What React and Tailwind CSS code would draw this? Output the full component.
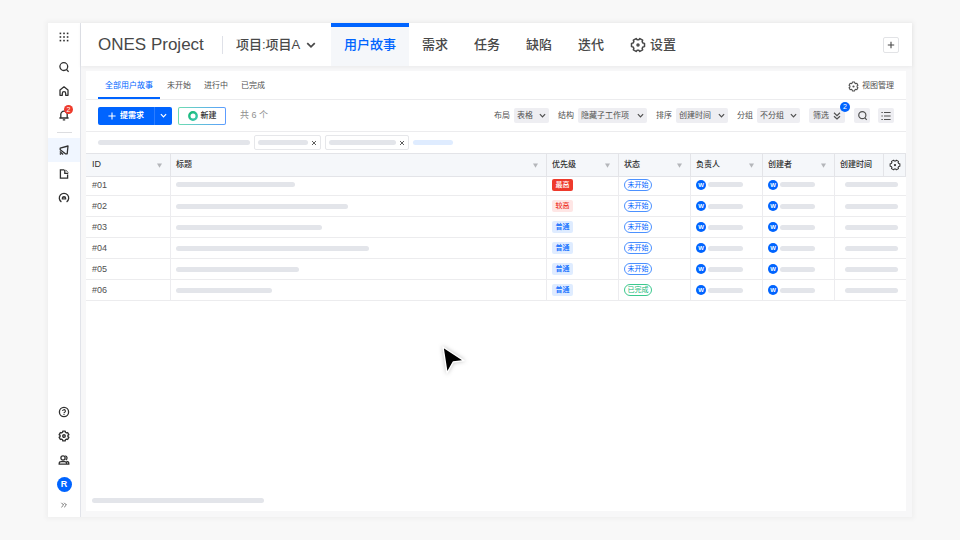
import { useState } from 'react';
import clsx from 'clsx';

const toggle = "cursor-pointer flex items-center justify-center";

const navTabs = ["用户故事", "需求", "任务", "缺陷", "迭代"];

const viewTabs = ["全部用户故事", "未开始", "进行中", "已完成"];

const filters = [
    { id: "layout", label: "布局", options: ["表格", "看板"], width: "w-[35px]" },
    { id: "tree", label: "结构", options: ["隐藏子工作项", "平铺"], width: "w-[69px]" },
    { id: "sort", label: "排序", options: ["创建时间", "优先级"], width: "w-[52px]" },
    { id: "group", label: "分组", options: ["不分组", "状态"], width: "w-[43px]" },
];

const columns = [
    { title: "ID", width: "w-[85px]" },
    { title: "标题", width: "" },
    { title: "优先级", width: "w-[72px]" },
    { title: "状态", width: "w-[72px]" },
    { title: "负责人", width: "w-[72px]" },
    { title: "创建者", width: "w-[72px]" },
];

const rows = [
    { id: "#01", size: 119, priority: "最高", status: "未开始" },
    { id: "#02", size: 172, priority: "较高", status: "未开始" },
    { id: "#03", size: 146, priority: "普通", status: "未开始" },
    { id: "#04", size: 193, priority: "普通", status: "未开始" },
    { id: "#05", size: 123, priority: "普通", status: "未开始" },
    { id: "#06", size: 96, priority: "普通", status: "已完成" },
];

const priorityStyle = {
    "最高": "bg-[#ee3a2c] text-white",
    "较高": "bg-[#fee6e5] text-[#ee3a2c]",
    "普通": "bg-[#dfecff] text-[#0064ff]",
};

// six teeth around the centre of a 16 x 16 box
const gearPoints = (turn) => {
    let points = [];
    for (let i = 0; i < 6; i++) {
        [[-21, 5.3], [-14, 6.7], [14, 6.7], [21, 5.3]].forEach(([angle, r]) => {
            let a = ((i * 60 + turn + angle) * Math.PI) / 180;
            points.push(`${(8 + r * Math.cos(a)).toFixed(2)},${(8 + r * Math.sin(a)).toFixed(2)}`);
        });
    }
    return points.join(" ");
};

const Gear = ({ className, turn = 0, stroke = 1.5, hole = 1 }) => (
    <svg viewBox="0 0 16 16" className={className} fill="none" stroke="currentColor" strokeWidth={stroke} strokeLinejoin="round">
        <polygon points={gearPoints(turn)} />
        <circle cx="8" cy="8" r={hole} />
    </svg>
);

const Chevron = ({ className }) => (
    <svg viewBox="0 0 8 8" className={className} fill="none" stroke="currentColor" strokeWidth="1.4">
        <path d="M1 2.5 4 5.5 7 2.5" />
    </svg>
);

const Search = ({ className }) => (
    <svg viewBox="0 0 12 12" className={className} fill="none" stroke="currentColor" strokeWidth="1.3">
        <circle cx="5.8" cy="5.6" r="3.9" />
        <path d="M8.4 8.4 10.6 10.8" />
    </svg>
);

const Icon = ({ children }) => (
    <svg viewBox="0 0 12 12" className="size-3" fill="none" stroke="currentColor" strokeWidth="1.3">
        {children}
    </svg>
);

const Bar = ({ className = "bg-[#e3e5ea]", size }) => (
    <div className={clsx("h-[5px] rounded-full", className)} style={size ? { width: size } : undefined} />
);

const SideButton = ({ label, active, children }) => (
    <button aria-label={label} className={clsx(toggle, "h-6 w-full shrink-0", active && "bg-[#f0f6ff]")}>
        {children}
    </button>
);

const Sidebar = () => (
    <aside className="w-[33px] shrink-0 border-r border-[#e1e3e9] bg-white text-[#303030] flex flex-col justify-between">
        <div>
            <button aria-label="应用" className={clsx(toggle, "h-7 w-full mb-1")}>
                <svg viewBox="0 0 10 10" className="size-2.5" fill="currentColor">
                    {[0.6, 4.2, 7.8].map((y) => [0.6, 4.2, 7.8].map((x) => (
                        <rect key={`${x}-${y}`} x={x} y={y} width="1.6" height="1.6" />
                    )))}
                </svg>
            </button>
            <SideButton label="搜索"><Search className="size-3" /></SideButton>
            <SideButton label="首页">
                <Icon>
                    <path d="M2 10.3V5L6 1.8 10 5v5.3H7.7V8.4a1.7 1.7 0 0 0-3.4 0v1.9Z" strokeLinejoin="round" />
                </Icon>
            </SideButton>
            <SideButton label="通知">
                <span className="relative">
                    <Icon>
                        <path d="M1.4 9h9.2M2.8 9V5.4a3.2 3.2 0 0 1 6.4 0V9M4.8 10.8h2.4" />
                    </Icon>
                    <span className="absolute -top-1 left-1.5 size-[9px] rounded-full bg-[#ee3a2c] text-white text-[7px] leading-[9px] text-center">2</span>
                </span>
            </SideButton>
            <div className="mx-auto my-[5px] h-px w-[15px] bg-[#dcdde0]" />
            <SideButton label="项目" active>
                <Icon>
                    <path d="M2.2 5.8V4.2L10 2 9.2 9.8H7.4L2.2 5.8Z" strokeLinejoin="round" />
                    <path d="M1.8 7.6 5.2 10.4M1.8 9.4 3 10.4" />
                </Icon>
            </SideButton>
            <SideButton label="文档">
                <Icon>
                    <path d="M6.4 1.8H2.4v8.4h7.2V6.4M6.8 2v3.4h3.4" />
                    <path d="M7.6 1.8 10.2 4.6" strokeWidth="0.8" />
                </Icon>
            </SideButton>
            <SideButton label="效能">
                <Icon>
                    <path d="M3.4 9.9A4.7 4.7 0 1 1 8.6 9.9" />
                    <path d="M4.4 7.6V6.2a1.6 1.6 0 0 1 3.2 0v1.4M6 5.4v2.4" />
                </Icon>
            </SideButton>
        </div>
        <div className="pb-[3px]">
            <SideButton label="帮助">
                <Icon>
                    <circle cx="6" cy="6" r="4.6" />
                    <path d="M4.6 5.1a1.4 1.4 0 1 1 2.1 1.2q-.7.3-.7 1M6 7.9v1" strokeWidth="1.1" />
                </Icon>
            </SideButton>
            <SideButton label="设置"><Gear className="size-3" turn={30} stroke={1.8} hole={1.7} /></SideButton>
            <SideButton label="成员">
                <Icon>
                    <circle cx="5" cy="4" r="2.1" />
                    <path d="M7.2 1.9a2.1 2.1 0 0 1 .6 4M1.2 10.2V9.4q0-1.8 2-1.8h3.4q2 0 2 1.8v.8ZM8.6 7.4q2.2.2 2.2 2v.8H8.6" />
                </Icon>
            </SideButton>
            <SideButton label="个人中心">
                <span className="size-[15px] rounded-full bg-[#0064ff] text-white text-[9px] leading-[15px] font-bold">R</span>
            </SideButton>
            <button aria-label="展开" className={clsx(toggle, "h-[18px] w-full")}>
                <svg viewBox="0 0 8 8" className="size-2" fill="none" stroke="currentColor" strokeWidth="0.7">
                    <path d="M1.4 1.8 3.6 4 1.4 6.2M4.2 1.8 6.4 4 4.2 6.2" />
                </svg>
            </button>
        </div>
    </aside>
);

const Header = () => {
    const [tab, setTab] = useState("用户故事");

    return (
        <header className="z-10 h-[43px] shrink-0 bg-white flex items-center pl-[17px] pr-[13px] text-[13px] text-[#484848] font-medium shadow-[0_1px_4px_rgba(0,0,0,0.06)]">
            <h1 className="text-[17px] font-normal whitespace-nowrap w-[124px]">ONES Project</h1>
            <div className="h-[18px] w-px bg-[#dfe1e8]" />
            <label className="grid items-center w-[93px] pl-[13px]">
                <select aria-label="项目" className="appearance-none outline-0 cursor-pointer col-start-1 row-start-1">
                    <option>项目:项目A</option>
                    <option>项目:项目B</option>
                </select>
                <Chevron className="size-2.5 col-start-1 row-start-1 justify-self-end pointer-events-none" />
            </label>
            <nav className="h-full flex ml-[15px]">
                {navTabs.map((item) => (
                    <a
                        key={item}
                        href="#"
                        onClick={() => setTab(item)}
                        className={clsx(
                            "px-[13px] border-y-4 border-b-transparent flex items-center whitespace-nowrap",
                            tab === item ? "border-t-[#0064ff] bg-[#f5f7fa] text-[#0064ff]" : "border-t-transparent"
                        )}
                    >
                        {item}
                    </a>
                ))}
                <a href="#" className="px-[13px] flex items-center gap-1 whitespace-nowrap">
                    <Gear className="size-4" />
                    设置
                </a>
            </nav>
            <button aria-label="添加" className={clsx(toggle, "ml-auto size-4 rounded-xs border border-[#e2e3e6]")}>
                <svg viewBox="0 0 8 8" className="size-2" stroke="currentColor" strokeWidth="1.1"><path d="M4 .8v6.4M.8 4h6.4" /></svg>
            </button>
        </header>
    );
};

const ViewTabs = () => {
    const [view, setView] = useState("全部用户故事");

    return (
        <div className="h-[29px] border-b border-[#ececee] flex items-stretch justify-between px-3">
            <div className="flex">
                {viewTabs.map((item) => (
                    <a
                        key={item}
                        href="#"
                        onClick={() => setView(item)}
                        className={clsx(
                            "flex items-center pt-1 border-b-2",
                            view === item ? "border-b-[#0064ff] text-[#0064ff] px-[7px] mr-[7px]" : "border-b-transparent mr-[13px]"
                        )}
                    >
                        {item}
                    </a>
                ))}
            </div>
            <button className={clsx(toggle, "gap-[3px] pt-0.5")}>
                <Gear className="size-[11px]" turn={30} stroke={1.6} hole={0.8} />
                视图管理
            </button>
        </div>
    );
};

const Toolbar = () => (
    <div className="h-8 border-b border-[#ececee] flex items-center px-3">
        <div className="flex h-[18px] rounded-xs bg-[#0064ff] text-white font-bold">
            <button className={clsx(toggle, "w-[57px] gap-1 border-r border-[#2b7dff]")}>
                <svg viewBox="0 0 8 8" className="size-2" stroke="currentColor" strokeWidth="1.1"><path d="M4 .4v7.2M.4 4h7.2" /></svg>
                提需求
            </button>
            <button aria-label="更多" className={clsx(toggle, "w-[17px]")}><Chevron className="size-[7px]" /></button>
        </div>
        <button className="ml-1.5 h-[18px] w-12 p-px rounded-xs bg-linear-to-r from-[#6fdcae] to-[#5c9bff] cursor-pointer">
            <span className="size-full rounded-[1px] bg-white flex items-center justify-center gap-[3px] font-medium text-[#303030]">
                <svg viewBox="0 0 10 10" className="size-2.5" fill="none" strokeWidth="2.4">
                    <defs>
                        <linearGradient id="ring" x1="0" y1="0" x2="1" y2="1">
                            <stop offset="0" stopColor="#16b877" />
                            <stop offset="1" stopColor="#3cc9b0" />
                        </linearGradient>
                    </defs>
                    <circle cx="5" cy="5" r="3.7" stroke="url(#ring)" />
                </svg>
                新建
            </span>
        </button>
        <span className="ml-3.5 text-[9px] text-[#909090]">共 6 个</span>

        <div className="ml-auto flex items-center gap-[9px]">
            {filters.map((item) => (
                <div className="flex items-center gap-1" key={item.id}>
                    <label htmlFor={item.id}>{item.label}</label>
                    <div className={clsx("grid items-center h-[15px] rounded-xs bg-[#eeeef2] px-[3px]", item.width)}>
                        <select id={item.id} className="appearance-none outline-0 cursor-pointer col-start-1 row-start-1">
                            {item.options.map((option) => <option key={option}>{option}</option>)}
                        </select>
                        <Chevron className="size-[7px] col-start-1 row-start-1 justify-self-end pointer-events-none" />
                    </div>
                </div>
            ))}
            <button className={clsx(toggle, "relative gap-1 h-[15px] w-9 rounded-xs bg-[#eeeef2]")}>
                筛选
                <svg viewBox="0 0 8 8" className="size-2" fill="none" stroke="currentColor" strokeWidth="1.2">
                    <path d="M1 .8 4 3.6 7 .8M1 4.2 4 7 7 4.2" />
                </svg>
                <span className="absolute -top-1.5 -right-[5px] size-[10px] rounded-full bg-[#0064ff] text-white text-[7px] leading-[10px]">2</span>
            </button>
            <div className="flex gap-2">
                <button aria-label="搜索" className={clsx(toggle, "h-[15px] w-4 rounded-xs bg-[#eeeef2]")}>
                    <Search className="size-[11px]" />
                </button>
                <button aria-label="列表" className={clsx(toggle, "h-[15px] w-4 rounded-xs bg-[#eeeef2]")}>
                    <svg viewBox="0 0 10 10" className="size-2.5" stroke="currentColor" strokeWidth="1.1">
                        <path d="M.4 1.5h1.4M3 1.5h6.6M.4 5h1.4M3 5h6.6M.4 8.5h1.4M3 8.5h6.6" />
                    </svg>
                </button>
            </div>
        </div>
    </div>
);

const FilterChip = ({ size }) => (
    <div className="h-[15px] border border-[#e6e7ea] rounded-xs flex items-center gap-[3px] px-[3px]">
        <Bar size={size} />
        <button aria-label="移除" className="cursor-pointer">
            <svg viewBox="0 0 6 6" className="size-1.5" stroke="#606060" strokeWidth="1"><path d="M1 1 5 5M5 1 1 5" /></svg>
        </button>
    </div>
);

const Person = () => (
    <div className="flex items-center gap-0.5">
        <span className="size-2.5 rounded-full bg-[#0064ff] text-white text-[6px] leading-[10px] text-center font-bold">W</span>
        <Bar size={35} />
    </div>
);

const cell = "border-r border-b border-r-[#ececef] border-b-[#ececee] pl-[5px]";

const StoryTable = () => (
    <table className="w-full table-fixed border-separate border-spacing-0 border-t border-[#e3e4e8] text-left">
        <thead>
            <tr className="h-[23px] bg-[#f5f7fa] text-[#303030]">
                {columns.map((item) => (
                    <th key={item.title} className={clsx("border-r border-b border-[#e3e4e8] pl-[5px] pr-2 font-medium first:pl-1.5 first:text-[9px]", item.width)}>
                        <div className="flex items-center justify-between">
                            {item.title}
                            <button aria-label={`排序 ${item.title}`} className="cursor-pointer">
                                <svg viewBox="0 0 5 5" className="size-[5px]" fill="#b4b6ba"><path d="M0 .5h5L2.5 4.8Z" /></svg>
                            </button>
                        </div>
                    </th>
                ))}
                <th className="w-[49px] border-r border-b border-[#e3e4e8] pl-[5px] font-medium">创建时间</th>
                <th className="w-[22px] border-r border-b border-[#e3e4e8]">
                    <button aria-label="列设置" className={clsx(toggle, "w-full")}>
                        <Gear className="size-3" stroke={1.4} hole={0.8} />
                    </button>
                </th>
            </tr>
        </thead>
        <tbody>
            {rows.map((item, i) => (
                <tr key={item.id} className={i === 0 ? "h-[19px] *:pb-[3px]" : "h-[21px]"}>
                    <td className={clsx(cell, "first:pl-1.5 text-[9px] leading-3")}>{item.id}</td>
                    <td className={cell}><Bar size={item.size} /></td>
                    <td className={cell}>
                        <span className={clsx("block w-[21px] h-3 rounded-xs text-center text-[7px] leading-3 font-medium", priorityStyle[item.priority])}>
                            {item.priority}
                        </span>
                    </td>
                    <td className={cell}>
                        <span className={clsx(
                            "block w-7 h-3 rounded-full border text-center text-[7px] leading-[10px]",
                            item.status === "已完成" ? "border-[#3cc98e] text-[#16b877]" : "border-[#4c91ff] text-[#0064ff]"
                        )}>
                            {item.status}
                        </span>
                    </td>
                    <td className={cell}><Person /></td>
                    <td className={cell}><Person /></td>
                    <td colSpan={2} className="border-b border-[#ececee] pl-2.5"><Bar size={53} /></td>
                </tr>
            ))}
        </tbody>
    </table>
);

const App = () => {
    return (
        <div className="min-h-screen bg-[#f8f8f8] px-12 py-[23px] flex font-['Liberation_Sans','Noto_Sans_CJK_SC',sans-serif] text-[8px] text-[#505050]">
            <div className="flex-1 min-w-0 flex bg-white shadow-[0_0_5px_2px_rgba(0,0,0,0.04)]">
                <Sidebar />
                <div className="flex-1 min-w-0 flex flex-col bg-[#f7f7f8]">
                    <Header />
                    <main className="relative flex-1 flex flex-col bg-white mt-[5px] mb-1.5 ml-[5px] mr-1.5">
                        <ViewTabs />
                        <Toolbar />
                        <div className="h-[21px] flex items-center gap-1 px-3">
                            <Bar size={152} />
                            <FilterChip size={50} />
                            <FilterChip size={67} />
                            <Bar size={40} className="bg-[#dfecff]" />
                        </div>
                        <StoryTable />
                        <div className="mt-auto px-1.5 pb-2">
                            <Bar size={172} />
                        </div>
                        <svg viewBox="0 0 28 32" className="absolute top-[271px] left-[352px] w-7 h-8 drop-shadow-[0_0_2px_rgba(0,0,0,0.25)]">
                            <path d="M5 5 26 18.6 15.2 20 9 31Z" fill="#000" stroke="#fff" strokeWidth="1.4" strokeLinejoin="round" />
                        </svg>
                    </main>
                </div>
            </div>
        </div>
    );
};
export default App;
